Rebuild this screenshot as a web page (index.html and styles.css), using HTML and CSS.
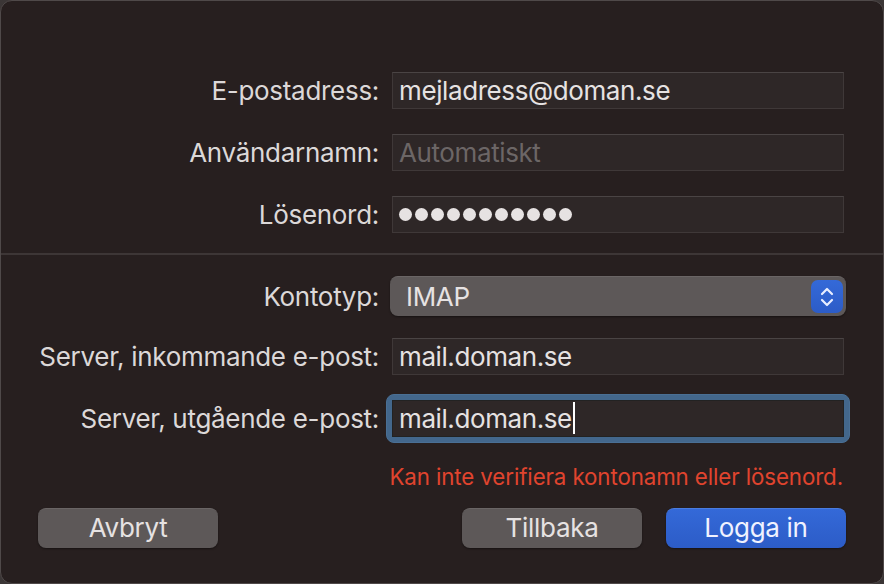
FILE: index.html
```html
<!DOCTYPE html>
<html lang="sv">
<head>
    <meta charset="UTF-8">
    <title>Lägg till konto</title>
    <link rel="stylesheet" href="styles.css">
</head>
<body>
    <div class="sheet">
        <div class="fields">
            <div class="row">
                <label class="label">E-postadress:</label>
                <div class="field">mejladress@doman.se</div>
            </div>
            <div class="row">
                <label class="label">Användarnamn:</label>
                <div class="field placeholder">Automatiskt</div>
            </div>
            <div class="row">
                <label class="label">Lösenord:</label>
                <div class="field dots">
                    <span></span><span></span><span></span><span></span><span></span><span></span><span></span><span></span><span></span><span></span><span></span>
                </div>
            </div>
        </div>

        <hr class="divider">

        <div class="fields server">
            <div class="row">
                <label class="label">Kontotyp:</label>
                <div class="popup">
                    <span>IMAP</span>
                    <span class="stepper">
                        <svg width="18" height="24" viewBox="0 0 18 24">
                            <path d="M4 9 L9 4 L14 9 M4 15 L9 20 L14 15" fill="none" stroke="#e8eeff" stroke-width="2.2" stroke-linecap="round" stroke-linejoin="round"/>
                        </svg>
                    </span>
                </div>
            </div>
            <div class="row">
                <label class="label">Server, inkommande e-post:</label>
                <div class="field">mail.doman.se</div>
            </div>
            <div class="row">
                <label class="label">Server, utgående e-post:</label>
                <div class="focus-ring">
                    <div class="field">mail.doman.se<span class="caret"></span></div>
                </div>
            </div>
        </div>

        <p class="error">Kan inte verifiera kontonamn eller lösenord.</p>

        <div class="buttons">
            <button class="btn">Avbryt</button>
            <div class="btn-group">
                <button class="btn">Tillbaka</button>
                <button class="btn primary">Logga in</button>
            </div>
        </div>
    </div>
</body>
</html>
```

FILE: styles.css
```css
:root {
    --bg: #271f1f;
    --text: #e2dede;
    --field-bg: #2e2727;
    --field-border: #3f3838;
    --gray-btn: #5d5858;
    --blue: #2f64d4;
}

html {
    background: #3b3636;
}

body {
    margin: 0;
    font-family: 'Inter', 'Liberation Sans', sans-serif;
    color: var(--text);
}

.sheet {
    box-sizing: border-box;
    width: 884px;
    height: 584px;
    background: var(--bg);
    border: 1px solid #4f4949;
    border-radius: 12px;
    padding-top: 71px;
    overflow: hidden;
}

/* Rader med etikett och fält */
.fields {
    display: flex;
    flex-direction: column;
    gap: 25px;
}

.row {
    display: grid;
    grid-template-columns: 378px 452px;
    column-gap: 13px;
    align-items: center;
}

.label {
    text-align: right;
    font-size: 26px;
    letter-spacing: -0.3px;
    color: #dcd8d8;
}

.field {
    box-sizing: border-box;
    height: 37px;
    padding: 0 6px;
    background: var(--field-bg);
    border: 1px solid var(--field-border);
    border-top-color: #4a4444;
    font-size: 26px;
    letter-spacing: -0.4px;
    line-height: 35px;
    color: #e6e2e2;
    white-space: nowrap;
}

.placeholder {
    color: #6c6666;
}

.dots {
    display: flex;
    align-items: center;
    gap: 3px;
}

.dots span {
    width: 13px;
    height: 13px;
    border-radius: 50%;
    background: #e6e2e2;
}

.divider {
    margin: 20px 0 21px;
    border: none;
    height: 2px;
    background: #3d3636;
}

.server {
    gap: 22px;
}

.server .row:last-child {
    margin-top: 3px;
}

/* Popup-meny */
.popup {
    box-sizing: border-box;
    display: flex;
    align-items: center;
    justify-content: space-between;
    height: 40px;
    margin: 0 -2px;
    padding: 0 3px 0 16px;
    background: var(--gray-btn);
    border-radius: 8px;
    border-top: 1px solid #6a6565;
    box-shadow: 0 1px 2px rgba(0,0,0,0.4);
    font-size: 26px;
    letter-spacing: -0.3px;
    color: #e6e2e2;
}

.stepper {
    display: flex;
    align-items: center;
    justify-content: center;
    width: 32px;
    height: 33px;
    border-radius: 7px;
    background: linear-gradient(#3469d8, #2c5cc7);
}

.focus-ring {
    margin: -6px;
    padding: 5px;
    border: 1px solid #4a6f94;
    border-radius: 8px;
    background: #43678c;
}

.focus-ring .field {
    border-color: #222;
}

.caret {
    display: inline-block;
    width: 2px;
    height: 32px;
    margin-left: 1px;
    vertical-align: -6px;
    background: #ffffff;
}

.error {
    margin: 26px 40px 0 0;
    text-align: right;
    font-size: 22.3px;
    letter-spacing: -0.1px;
    color: #e0442e;
}

/* Knappar */
.buttons {
    display: flex;
    justify-content: space-between;
    margin: 18px 37px 0 37px;
}

.btn-group {
    display: flex;
    gap: 24px;
}

.btn {
    width: 180px;
    height: 40px;
    border: none;
    border-top: 1px solid #6a6565;
    border-radius: 8px;
    background: var(--gray-btn);
    box-shadow: 0 1px 2px rgba(0,0,0,0.4);
    font-family: inherit;
    font-size: 26px;
    letter-spacing: -0.3px;
    color: #e6e2e2;
    padding: 0 0 3px;
}

.btn.primary {
    background: linear-gradient(#3469d8, #2c5cc7);
    border-top-color: #4a7ce0;
    color: #f0f2ff;
}
```
